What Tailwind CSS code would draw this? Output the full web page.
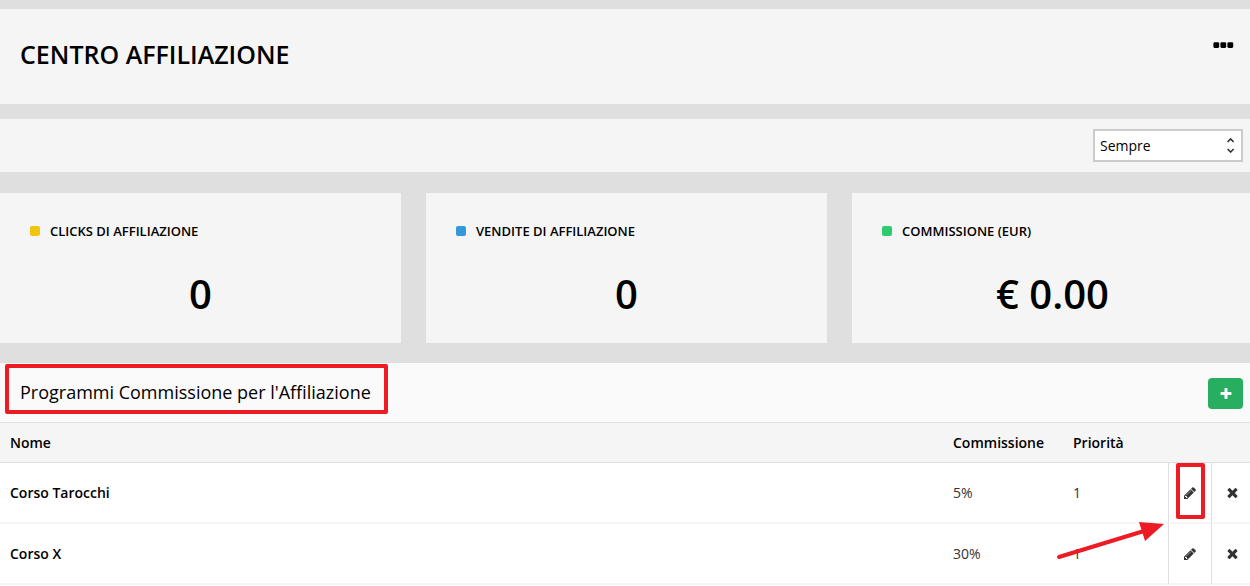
<!DOCTYPE html>
<html lang="it">
<head>
  <meta charset="UTF-8">
  <meta name="viewport" content="width=device-width, initial-scale=1.0">
  <title>Centro Affiliazione</title>
  <script src="https://cdn.jsdelivr.net/npm/@tailwindcss/browser@4"></script>
</head>
<body class="min-h-screen overflow-hidden bg-[#dfdfdf] pt-[9px] font-['Open_Sans',sans-serif] text-sm text-black">

  <!-- Icons -->
  <svg class="hidden">
    <symbol id="pencil" viewBox="0 0 1792 1792"><path d="M491 1536l91-91-235-235-91 91v107h128v128h107zm523-928q0-22-22-22-10 0-17 7l-542 542q-7 7-7 17 0 22 22 22 10 0 17-7l542-542q7-7 7-17zm-54-192l416 416-832 832h-416v-416zm683 96q0 53-37 90l-166 166-416-416 166-165q36-38 90-38 53 0 91 38l235 234q37 39 37 91z"/></symbol>
    <symbol id="times" viewBox="0 0 1792 1792"><path d="M1490 1322q0 40-28 68l-136 136q-28 28-68 28t-68-28l-294-294-294 294q-28 28-68 28t-68-28l-136-136q-28-28-28-68t28-68l294-294-294-294q-28-28-28-68t28-68l136-136q28-28 68-28t68 28l294 294 294-294q28-28 68-28t68 28l136 136q28 28 28 68t-28 68l-294 294 294 294q28 28 28 68z"/></symbol>
    <symbol id="plus" viewBox="0 0 1792 1792"><path d="M1600 736v192q0 40-28 68t-68 28h-416v416q0 40-28 68t-68 28h-192q-40 0-68-28t-28-68v-416h-416q-40 0-68-28t-28-68v-192q0-40 28-68t68-28h416v-416q0-40 28-68t68-28h192q40 0 68 28t28 68v416h416q40 0 68 28t28 68z"/></symbol>
  </svg>

  <!-- Header Section -->
  <header class="flex h-[95px] items-center justify-between bg-[#f5f5f5] pr-4 pb-1.5 pl-5">
    <h1 class="text-[25px] leading-9 font-semibold">CENTRO AFFILIAZIONE</h1>
    <button type="button" aria-label="Menu" class="mb-[18px]">
      <svg class="h-2 w-[21px]" viewBox="0 0 21 8"><rect x="0.4" y="1.3" width="5.8" height="5.6" rx="1.3"/><rect x="7.4" y="1.3" width="5.8" height="5.6" rx="1.3"/><rect x="14.4" y="1.3" width="5.8" height="5.6" rx="1.3"/></svg>
    </button>
  </header>

  <!-- Period filter -->
  <div class="mt-[15px] flex h-[53px] items-center justify-end bg-[#f5f5f5] pr-[7px]">
    <div class="relative">
      <select aria-label="Periodo" class="block h-[33px] w-[150px] appearance-none border-2 border-[#ccc] bg-white pl-[5px] text-sm">
        <option>Sempre</option>
      </select>
      <svg class="pointer-events-none absolute top-2 right-2 h-4 w-2" viewBox="0 0 8 16" fill="none" stroke="#333" stroke-width="1.6"><path d="M0.6 5l3-3 3 3M0.6 12l3 3 3-3"/></svg>
    </div>
  </div>

  <!-- Stats -->
  <main>
    <section class="-mr-[3px] mt-[21px] grid grid-cols-3 gap-[25px]">
      <div class="h-[150px] bg-[#f5f5f5] px-[30px] pt-7">
        <h2 class="flex items-center gap-[10px] text-[13px] leading-5 font-semibold"><span class="size-[10px] rounded-xs bg-[#f1c40f]"></span>CLICKS DI AFFILIAZIONE</h2>
        <p class="mt-[23px] text-center text-[40px] leading-[60px] font-semibold">0</p>
      </div>
      <div class="h-[150px] bg-[#f5f5f5] px-[30px] pt-7">
        <h2 class="flex items-center gap-[10px] text-[13px] leading-5 font-semibold"><span class="size-[10px] rounded-xs bg-[#3498db]"></span>VENDITE DI AFFILIAZIONE</h2>
        <p class="mt-[23px] text-center text-[40px] leading-[60px] font-semibold">0</p>
      </div>
      <div class="h-[150px] bg-[#f5f5f5] px-[30px] pt-7">
        <h2 class="flex items-center gap-[10px] text-[13px] leading-5 font-semibold"><span class="size-[10px] rounded-xs bg-[#2ecc71]"></span>COMMISSIONE (EUR)</h2>
        <p class="mt-[23px] text-center text-[40px] leading-[60px] font-semibold">€ 0.00</p>
      </div>
    </section>

    <!-- Commission programs -->
    <section class="relative mt-5 bg-white pb-4">
      <div class="relative flex h-[59px] items-center justify-between bg-[#fafafa] pt-0.5 pr-[7px] pl-5">
        <h2 class="mb-1 text-lg">Programmi Commissione per l'Affiliazione</h2>
        <button type="button" aria-label="Aggiungi" class="flex h-[31px] w-[35px] items-center justify-center rounded bg-[#27ae60]">
          <svg class="size-[14px] fill-white"><use href="#plus"/></svg>
        </button>
        <div class="absolute top-px left-[5px] h-[50px] w-[383px] rounded-xs border-4 border-[#ed1c24]"></div>
      </div>

      <table class="w-full table-fixed border-separate border-spacing-0 text-left">
        <thead>
          <tr class="h-[41px] bg-[#f5f5f5]">
            <th class="border-y border-[#dfdfdf] pl-[10px] font-semibold">Nome</th>
            <th class="w-[120px] border-y border-[#dfdfdf] pl-[10px] font-semibold">Commissione</th>
            <th class="w-[105px] border-y border-[#dfdfdf] pl-[10px] font-semibold">Priorità</th>
            <th class="w-[43px] border-y border-[#dfdfdf]"></th>
            <th class="w-[39px] border-y border-[#dfdfdf]"></th>
          </tr>
        </thead>
        <tbody>
          <tr class="h-[61px]">
            <td class="border-b-2 border-[#f5f5f5] pl-[10px] font-semibold">Corso Tarocchi</td>
            <td class="border-b-2 border-[#f5f5f5] pl-[10px] text-[#333]">5%</td>
            <td class="border-b-2 border-[#f5f5f5] pl-[10px] text-[#333]">1</td>
            <td class="relative border-b-2 border-l border-b-[#f5f5f5] border-l-[#dfdfdf] pl-[14px]">
              <button type="button" aria-label="Modifica" class="block"><svg class="size-[14px] fill-[#333]"><use href="#pencil"/></svg></button>
              <div class="absolute top-0 left-[7px] h-14 w-[29px] rounded-xs border-4 border-[#ed1c24]"></div>
            </td>
            <td class="border-b-2 border-l border-b-[#f5f5f5] border-l-[#dfdfdf] pl-[13px]">
              <button type="button" aria-label="Elimina" class="block"><svg class="size-[15px] fill-[#333]"><use href="#times"/></svg></button>
            </td>
          </tr>
          <tr class="h-[61px]">
            <td class="border-b-2 border-[#f5f5f5] pl-[10px] font-semibold">Corso X</td>
            <td class="border-b-2 border-[#f5f5f5] pl-[10px] text-[#333]">30%</td>
            <td class="border-b-2 border-[#f5f5f5] pl-[10px] text-[#333]">1</td>
            <td class="border-b-2 border-l border-b-[#f5f5f5] border-l-[#dfdfdf] pl-[14px]">
              <button type="button" aria-label="Modifica" class="block"><svg class="size-[14px] fill-[#333]"><use href="#pencil"/></svg></button>
            </td>
            <td class="border-b-2 border-l border-b-[#f5f5f5] border-l-[#dfdfdf] pl-[13px]">
              <button type="button" aria-label="Elimina" class="block"><svg class="size-[15px] fill-[#333]"><use href="#times"/></svg></button>
            </td>
          </tr>
        </tbody>
      </table>

      <!-- Arrow to the edit button -->
      <svg class="pointer-events-none absolute top-[157px] right-[84px] h-10 w-[110px]" viewBox="0 0 110 40"><path d="M3 37L88 11" stroke="#ed1c24" stroke-width="4" stroke-linecap="round"/><path d="M83 2l25 2-19 17z" fill="#ed1c24"/></svg>
    </section>
  </main>

</body>
</html>
